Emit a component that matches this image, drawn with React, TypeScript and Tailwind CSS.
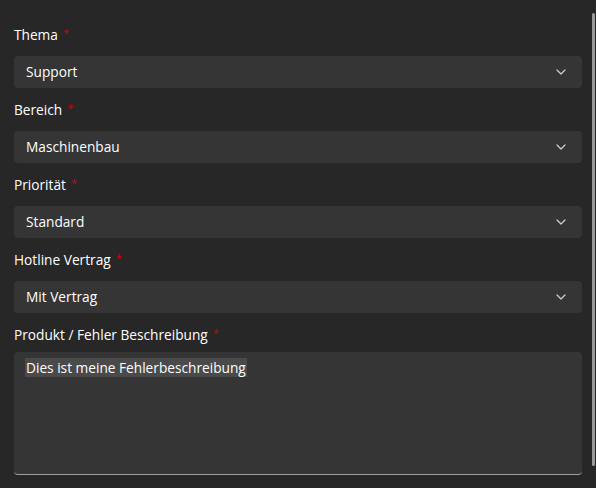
import React from "react";

const Chevron = () => (
  <svg width="10" height="6" viewBox="0 0 10 6" fill="none">
    <path d="M1 1 L5 5 L9 1" stroke="#d0d0d0" strokeWidth="1.2" strokeLinecap="round" strokeLinejoin="round" />
  </svg>
);

const Label = ({ text, className = "" }: { text: string; className?: string }) => (
  <div className={`h-5 flex items-center text-[13.7px] text-[#ffffff] ${className}`}>
    <span>{text}</span>
    <span className="ml-[5px] text-[#d40000] text-[11px] relative -top-[2px]">*</span>
  </div>
);

const Select = ({ value }: { value: string }) => (
  <div className="mt-[11px] h-8 rounded-[4px] bg-[#353535] flex items-center justify-between pl-3 pr-[16px] text-[13.7px] text-[#ffffff]">
    <span>{value}</span>
    <Chevron />
  </div>
);

export default function App() {
  const fields = [
    ["Thema", "Support"],
    ["Bereich", "Maschinenbau"],
    ["Priorität", "Standard"],
    ["Hotline Vertrag", "Mit Vertrag"],
  ];
  return (
    <div
      className="w-[596px] h-[488px] bg-[#272727] relative overflow-hidden"
      style={{ fontFamily: '"Segoe UI", "Open Sans", "Noto Sans", sans-serif' }}
    >
      <div className="pl-[14px] pr-[14px] pt-[25px] flex flex-col">
        {fields.map(([l, v], i) => (
          <div key={l} className={i > 0 ? "mt-3" : ""}>
            <Label text={l} />
            <Select value={v} />
          </div>
        ))}
        <div className="mt-3">
          <Label text="Produkt / Fehler Beschreibung" />
          <div className="mt-[7px] h-[123px] rounded-[4px] bg-[#353535] border-b border-[#a0a0a0] pl-[11px] pt-[6px]">
            <div className="w-fit bg-[#4a4a4a] text-[13.7px] text-[#ffffff] leading-[19px] px-[1px]">
              Dies ist meine Fehlerbeschreibung
            </div>
          </div>
        </div>
      </div>
      <div className="absolute left-[592px] top-[13px] w-[3px] h-[453px] rounded-full bg-[#9a9a9a]" />
    </div>
  );
}
